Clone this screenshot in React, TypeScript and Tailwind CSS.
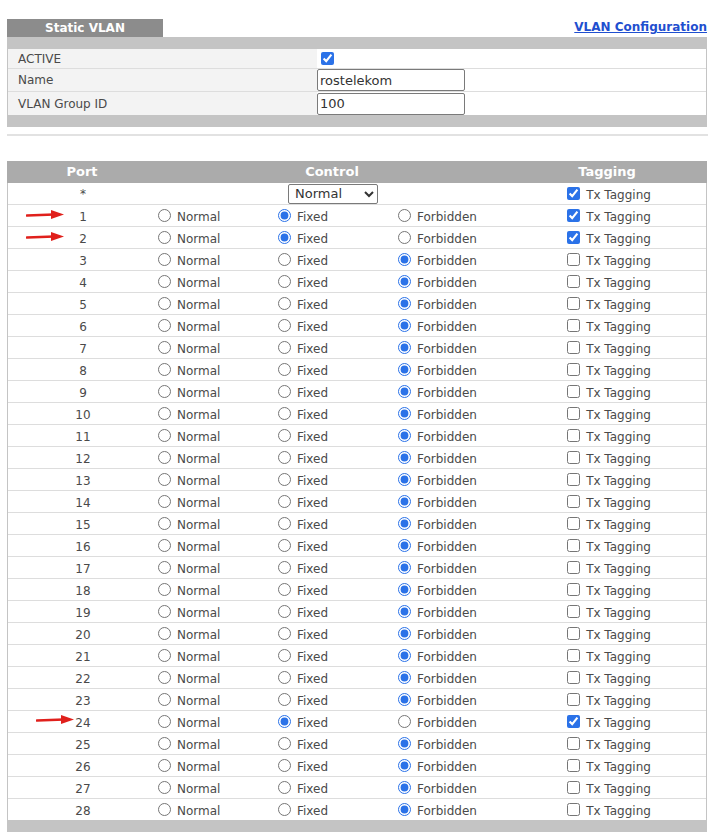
import React from "react";

type Mode = "normal" | "fixed" | "forbidden";

interface PortRow {
  port: number;
  mode: Mode;
  tagged: boolean;
}

const ports: PortRow[] = Array.from({ length: 28 }, (_, i) => {
  const port = i + 1;
  const member = port === 1 || port === 2 || port === 24;
  return { port, mode: member ? "fixed" : "forbidden", tagged: member };
});

const arrowPorts: Record<number, string> = {
  1: "left-[18px] top-[4px]",
  2: "left-[18px] top-[4px]",
  24: "left-[28px] top-[3px]",
};

function RedArrow({ className }: { className: string }) {
  return (
    <svg className={`absolute ${className}`} width="40" height="12" viewBox="0 0 40 12">
      <path d="M1 6.5 L28 5.5" stroke="#e0201c" strokeWidth="2.6" strokeLinecap="round" />
      <path d="M25 1 L38 5.5 L25 10 Z" fill="#e0201c" />
    </svg>
  );
}

function Radio({ checked, label }: { checked: boolean; label: string }) {
  return (
    <label className="flex items-center gap-[6px]">
      <input
        type="radio"
        readOnly
        checked={checked}
        className="m-0 h-[13px] w-[13px] accent-[#2b72e8]"
      />
      <span className="pt-[2px]">{label}</span>
    </label>
  );
}

function TxTagging({ checked }: { checked: boolean }) {
  return (
    <label className="flex items-center justify-center gap-[6px] pl-[4px]">
      <input
        type="checkbox"
        readOnly
        checked={checked}
        className="m-0 h-[13px] w-[13px] accent-[#2b72e8]"
      />
      <span className="pt-[2px]">Tx Tagging</span>
    </label>
  );
}

const grid = "grid grid-cols-[150px_120px_120px_110px_1fr]";

export default function App() {
  return (
    <div className="min-h-[840px] bg-white pl-[7px] pt-[18px] text-[12px] text-[#4a4a4a] [font-family:'DejaVu_Sans',sans-serif]">
      <div className="w-[700px]">
        {/* title tab + link */}
        <div className="flex items-end justify-between">
          <div className="flex h-[18px] w-[156px] items-center justify-center bg-[#8c8c8c] text-[12px] font-bold text-white">
            Static VLAN
          </div>
          <a href="#" className="mb-[1px] text-[12px] font-bold text-[#1f4fcf] underline">
            VLAN Configuration
          </a>
        </div>

        {/* general settings */}
        <div className="border-x border-[#c4c4c4]">
          <div className="-mx-px h-[12px] bg-[#c4c4c4]" />
          <div className="flex h-[20px] border-b border-[#dddddd]">
            <div className="flex w-[309px] items-center bg-[#f3f3f3] pl-[10px]">ACTIVE</div>
            <div className="flex items-center pl-[4px]">
              <input type="checkbox" readOnly checked className="m-0 h-[13px] w-[13px] accent-[#2b72e8]" />
            </div>
          </div>
          <div className="flex h-[23px] border-b border-[#dddddd]">
            <div className="flex w-[309px] items-center bg-[#f3f3f3] pl-[10px]">Name</div>
            <div className="flex items-center">
              <input
                type="text"
                readOnly
                value="rostelekom"
                className="h-[22px] w-[148px] rounded-[2px] border border-[#7a7a7a] px-[2px] text-[13px] text-[#333] outline-none"
              />
            </div>
          </div>
          <div className="flex h-[23px]">
            <div className="flex w-[309px] items-center bg-[#f3f3f3] pl-[10px]">VLAN Group ID</div>
            <div className="flex items-center">
              <input
                type="text"
                readOnly
                value="100"
                className="h-[22px] w-[148px] rounded-[2px] border border-[#7a7a7a] px-[2px] text-[13px] text-[#333] outline-none"
              />
            </div>
          </div>
          <div className="-mx-px h-[12px] bg-[#c4c4c4]" />
        </div>

        <div className="mt-[7px] h-[2px] w-[701px] bg-[#e2e2e2]" />

        {/* port table */}
        <div className="mt-[25px] border-x border-[#c4c4c4]">
          <div className={`${grid} -mx-px h-[22px] items-center bg-[#ababab] text-[13px] font-bold text-white`}>
            <div className="text-center">Port</div>
            <div className="col-span-3 text-center">Control</div>
            <div className="text-center">Tagging</div>
          </div>

          <div className={`${grid} h-[22px] items-center border-b border-[#dddddd]`}>
            <div className="text-center">*</div>
            <div className="col-span-3 flex justify-center">
              <select
                defaultValue="Normal"
                className="h-[20px] w-[90px] rounded-[2px] border border-[#7a7a7a] bg-white pl-[2px] text-[13px] text-[#333]"
              >
                <option>Normal</option>
                <option>Fixed</option>
                <option>Forbidden</option>
              </select>
            </div>
            <TxTagging checked />
          </div>

          {ports.map((row) => (
            <div key={row.port} className={`${grid} h-[22px] items-center border-b border-[#dddddd]`}>
              <div className="relative h-full">
                {arrowPorts[row.port] && <RedArrow className={arrowPorts[row.port]} />}
                <div className="flex h-full items-center justify-center pt-[2px]">{row.port}</div>
              </div>
              <Radio checked={row.mode === "normal"} label="Normal" />
              <Radio checked={row.mode === "fixed"} label="Fixed" />
              <Radio checked={row.mode === "forbidden"} label="Forbidden" />
              <TxTagging checked={row.tagged} />
            </div>
          ))}
          <div className="-mx-px -mt-px h-[12px] bg-[#c4c4c4]" />
        </div>
      </div>
    </div>
  );
}
